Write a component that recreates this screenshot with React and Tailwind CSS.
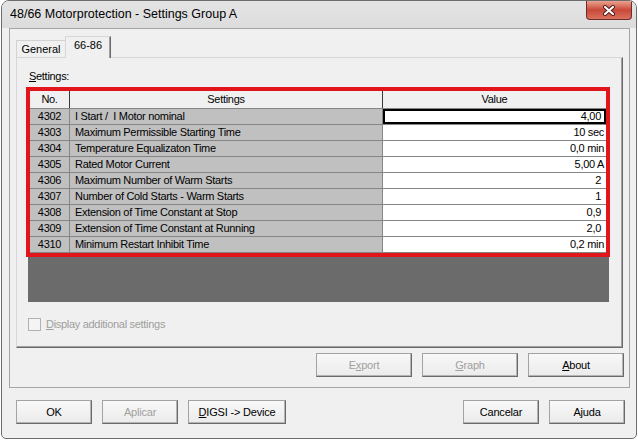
import React from "react";

const rows = [
  ["4302", "I Start /  I Motor nominal", "4,00", true],
  ["4303", "Maximum Permissible Starting Time", "10 sec"],
  ["4304", "Temperature Equalizaton Time", "0,0 min"],
  ["4305", "Rated Motor Current", "5,00 A"],
  ["4306", "Maximum Number of Warm Starts", "2", true],
  ["4307", "Number of Cold Starts - Warm Starts", "1", true],
  ["4308", "Extension of Time Constant at Stop", "0,9", true],
  ["4309", "Extension of Time Constant at Running", "2,0", true],
  ["4310", "Minimum Restart Inhibit Time", "0,2 min"],
];

const Btn = ({ children, disabled, className }) => (
  <button
    className={
      "h-[24px] border border-[#a3a3a3] border-b-[#6a6a6a] border-r-[#6a6a6a] bg-linear-to-b from-[#f8f8f8] to-[#ebebeb] shadow-[inset_-1px_-1px_0_#b4b4b4] text-[11px] tracking-[-0.2px] " +
      (disabled ? "text-[#a0a0a0] " : "text-black ") +
      className
    }
  >
    {children}
  </button>
);

const App = () => {
  return (
    <div className="w-[638px] h-[442px] bg-white font-['Liberation_Sans',Arial,sans-serif] text-black">
      <div className="ml-[1px] w-[636px] h-[439px] rounded-t-[8px] rounded-b-[5px] border border-[#6c6c6c] bg-[#f0f0f0] overflow-hidden flex flex-col">
        {/* title bar */}
        <div className="h-[27px] flex items-start justify-between bg-linear-to-b from-[#e4e4e4] to-[#dcdcdc]">
          <div className="pl-[8px] pt-[6px] text-[12.5px] leading-[15px]">
            48/66 Motorprotection - Settings Group A
          </div>
          <div className="mr-[4px] w-[46px] h-[19px] rounded-b-[4px] border border-t-0 border-[#6e2c24] bg-linear-to-b from-[#e8a290] via-[#c9483a] to-[#d9705d] flex items-center justify-center">
            <svg width="14" height="11" viewBox="0 0 14 11">
              <path d="M3 2 L11 9 M11 2 L3 9" stroke="#4a1a14" strokeWidth="4" strokeLinecap="round" />
              <path d="M3 2 L11 9 M11 2 L3 9" stroke="#ffffff" strokeWidth="2.2" strokeLinecap="round" />
            </svg>
          </div>
        </div>

        {/* frame */}
        <div className="ml-[7px] w-[621px] h-[360px] border border-[#a5a5a5] flex flex-col">
          <div className="pl-[6px] pt-[7px]">
            {/* tabs */}
            <div className="flex items-end h-[21px]">
              <div className="h-[17px] w-[49px] border border-b-0 border-[#d2d2d2] border-r-0 bg-[#f0f0f0] text-[11px] leading-[16px] text-center">
                General
              </div>
              <div className="relative z-10 -mb-[1px] h-[22px] w-[46px] border border-b-0 border-[#d6d6d6] border-r-[#6a6a6a] bg-[#f0f0f0] text-[11px] leading-[17px] text-center shadow-[inset_-1px_0_0_#a0a0a0]">
                66-86
              </div>
            </div>
            {/* panel */}
            <div className="w-[607px] h-[291px] border border-[#d6d6d6] border-r-[#6a6a6a] border-b-[#6a6a6a] shadow-[inset_-1px_-1px_0_#a0a0a0] pl-[11px] pt-[12px]">
              <div className="ml-[1px] text-[11px] leading-[13px] tracking-[-0.3px]">
                <span className="underline">S</span>ettings:
              </div>
              <div className="relative mt-[5px] w-[581px] h-[214px] bg-[#6b6b6b] pl-[2px] pt-[3px]">
                <div className="w-[576px] text-[11px] tracking-[-0.3px]">
                  <div className="flex h-[18px] bg-[#f0f0f0] border-b border-[#858585] leading-[17px]">
                    <div className="w-[40px] text-center border-r border-[#3a3a3a]">No.</div>
                    <div className="w-[313px] text-center border-r border-[#3a3a3a]">Settings</div>
                    <div className="flex-1 text-center">Value</div>
                  </div>
                  {rows.map(([no, name, val, pad], i) => (
                    <div key={no} className="flex h-[16px] border-b border-[#858585] leading-[15px]">
                      <div className="w-[40px] bg-[#c0c0c0] text-center border-r border-[#858585]">{no}</div>
                      <div className="w-[313px] bg-[#c0c0c0] pl-[5px] border-r border-[#858585] whitespace-pre">{name}</div>
                      <div
                        className={
                          "flex-1 bg-white text-right " +
                          (i === 0 ? "border-2 border-black leading-[11px] " : "") +
                          (pad ? (i === 0 ? "pr-[3px]" : "pr-[5px]") : "pr-[2px]")
                        }
                      >
                        {val}
                      </div>
                    </div>
                  ))}
                </div>
                <div className="absolute left-[-2px] top-[-1px] w-[584px] h-[170px] border-[4px] border-[#e2151d]"></div>
              </div>
              <div className="mt-[16px] flex items-center">
                <div className="w-[13px] h-[13px] border border-[#b1b1b1] bg-[#f4f4f4]"></div>
                <div className="ml-[5px] text-[11px] tracking-[-0.3px] text-[#9e9e9e] leading-[13px]">
                  <span className="underline">D</span>isplay additional settings
                </div>
              </div>
            </div>
          </div>
          <div className="mt-[5px] flex justify-end gap-[10px] pr-[5px]">
            <Btn disabled className="w-[96px]">
              E<span className="underline">x</span>port
            </Btn>
            <Btn disabled className="w-[96px]">
              <span className="underline">G</span>raph
            </Btn>
            <Btn className="w-[96px]">
              <span className="underline">A</span>bout
            </Btn>
          </div>
        </div>

        {/* bottom buttons */}
        <div className="mt-[12px] flex pl-[14px] pr-[11px]">
          <div className="flex gap-[10px]">
            <Btn className="w-[76px]">OK</Btn>
            <Btn disabled className="w-[76px]">Aplicar</Btn>
            <Btn className="w-[98px]">
              <span className="underline">D</span>IGSI -&gt; Device
            </Btn>
          </div>
          <div className="ml-auto flex gap-[10px]">
            <Btn className="w-[76px]">Cancelar</Btn>
            <Btn className="w-[76px]">Ajuda</Btn>
          </div>
        </div>
      </div>
    </div>
  );
};

export default App;
